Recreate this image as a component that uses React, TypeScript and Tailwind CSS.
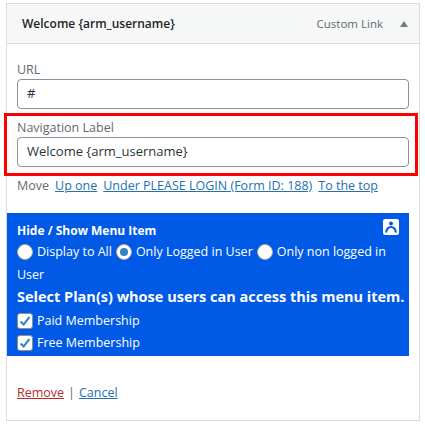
import React from 'react'

const font = { fontFamily: '"Open Sans", "Noto Sans", sans-serif' }

const Radio = ({ checked }: { checked?: boolean }) => (
  <span className="inline-flex w-[16px] h-[16px] rounded-full bg-white border border-[#a7aaad] items-center justify-center mr-[4px]">
    {checked && <span className="block w-[8px] h-[8px] rounded-full bg-[#3582c4]" />}
  </span>
)

const Check = () => (
  <span className="inline-flex w-[16px] h-[16px] rounded-[3px] bg-white border border-[#8c8f94] items-center justify-center mr-[4px]">
    <svg viewBox="0 0 16 16" className="w-[14px] h-[14px]">
      <path d="M3 8.5 L6.5 12 L13 3.5" fill="none" stroke="#3582c4" strokeWidth="2.4" strokeLinejoin="miter" />
    </svg>
  </span>
)

export default function App() {
  return (
    <div className="w-[425px] h-[426px] bg-white pt-[3px] pl-[6px]" style={font}>
      <div className="w-[414px] h-[418px] border border-[#dcdcde] flex flex-col">
        <div className="h-[40px] shrink-0 bg-[#f6f7f7] border-b border-[#dcdcde] flex items-center pl-[15px] pr-[11px]">
          <span className="text-[12px] font-semibold text-[#1d2327]">Welcome {'{'}arm_username{'}'}</span>
          <span className="ml-auto text-[11.5px] text-[#646970]">Custom Link</span>
          <svg viewBox="0 0 8 6" className="w-[8px] h-[6px] ml-[17px]">
            <path d="M0 6 L4 0 L8 6 Z" fill="#787c82" />
          </svg>
        </div>
        <div className="px-[10px] pt-[17px] flex flex-col">
          <div className="h-[18px] leading-[18px] text-[12.5px] text-[#646970]">URL</div>
          <div className="h-[30px] w-[392px] border border-[#8c8f94] rounded-[4px] flex items-center px-[9px] text-[13px] text-[#2c3338]">#</div>

          <div className="relative mt-[10px]">
            <div className="absolute -left-[13px] -top-[6px] w-[414px] h-[63px] border-[3px] border-[#ff0000]" />
            <div className="h-[18px] leading-[18px] text-[12.5px] text-[#646970]">Navigation Label</div>
            <div className="h-[30px] w-[392px] border border-[#8c8f94] rounded-[4px] flex items-center px-[9px] text-[13px] text-[#2c3338]">
              Welcome {'{'}arm_username{'}'}
            </div>
          </div>

          <div className="mt-[10px] h-[18px] leading-[18px] text-[12.5px] text-[#646970] flex gap-[6px]">
            <span>Move</span>
            <span className="text-[#2271b1] underline">Up one</span>
            <span className="text-[#2271b1] underline">Under PLEASE LOGIN (Form ID: 188)</span>
            <span className="text-[#2271b1] underline">To the top</span>
          </div>

          <div className="mt-[18px] -ml-[10px] w-[402px] h-[143px] bg-[#005ae6] text-white pl-[10px] pr-[6px] pt-[9px]">
            <div className="flex items-center h-[18px]">
              <span className="text-[12px] font-bold">Hide / Show Menu Item</span>
              <span className="ml-auto mr-[4px] -mt-[8px] w-[16px] h-[16px] rounded-[2px] bg-white flex items-center justify-center">
                <svg viewBox="0 0 16 16" className="w-[16px] h-[16px]">
                  <circle cx="8" cy="4.5" r="2" fill="#005ae6" />
                  <path d="M3 13.5 Q4 8 8 8 Q12 8 13 13.5" fill="none" stroke="#005ae6" strokeWidth="2" />
                </svg>
              </span>
            </div>
            <div className="text-[12.5px] leading-[23px]">
              <div className="flex items-center h-[23px] gap-[4px]">
                <span className="flex items-center"><Radio />Display to All</span>
                <span className="flex items-center"><Radio checked />Only Logged in User</span>
                <span className="flex items-center"><Radio />Only non logged in</span>
              </div>
              <div className="h-[23px]">User</div>
            </div>
            <div className="text-[14.5px] font-bold leading-[22px] whitespace-nowrap">
              Select Plan(s) whose users can access this menu item.
            </div>
            <div className="mt-[2px] flex items-center h-[22px] text-[12.5px]">
              <Check />Paid Membership
            </div>
            <div className="flex items-center h-[22px] text-[12.5px]">
              <Check />Free Membership
            </div>
          </div>

          <div className="mt-[28px] h-[18px] leading-[18px] text-[12.5px] text-[#646970] flex gap-[4px]">
            <span className="text-[#b32d2e] underline">Remove</span>
            <span>|</span>
            <span className="text-[#2271b1] underline">Cancel</span>
          </div>
        </div>
      </div>
    </div>
  )
}
